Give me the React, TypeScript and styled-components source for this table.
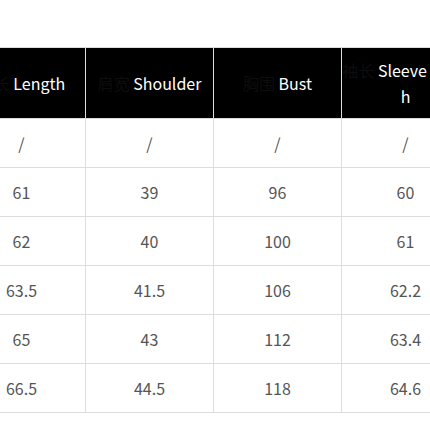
import { createGlobalStyle } from 'styled-components';
import styled from 'styled-components';

const GlobalStyle = createGlobalStyle`
  html, body {
    margin: 0;
    padding: 0;
    background: #fff;
  }
  body {
    font-family: "Noto Sans CJK SC", "Noto Sans", sans-serif;
  }
`;

const Frame = styled.div`
  width: 430px;
  height: 430px;
  overflow: hidden;
  padding-top: 47px;
  box-sizing: border-box;
`;

const SizeTable = styled.table`
  margin-left: -43px;
  width: 512px;
  table-layout: fixed;
  border-collapse: collapse;
`;

const Col = styled.col`
  width: 128px;
`;

const HeadCell = styled.th`
  box-sizing: border-box;
  height: 71px;
  padding: 0;
  background: #000;
  color: #fff;
  font-size: 16px;
  font-weight: 400;
  line-height: 26px;
  text-align: center;
  word-break: break-all;
  border: 1px solid #ddd;
`;

const Hidden = styled.span`
  color: #0d0d0d;
`;

const Cell = styled.td`
  box-sizing: border-box;
  height: 49px;
  padding: 0;
  color: #555;
  font-size: 16px;
  text-align: center;
  border: 1px solid #ddd;
`;

const columns = [
  { cn: '衣长', en: 'Length' },
  { cn: '肩宽', en: 'Shoulder' },
  { cn: '胸围', en: 'Bust' },
  { cn: '袖长', en: 'Sleeve length' },
];

const rows = [
  ['/', '/', '/', '/'],
  ['61', '39', '96', '60'],
  ['62', '40', '100', '61'],
  ['63.5', '41.5', '106', '62.2'],
  ['65', '43', '112', '63.4'],
  ['66.5', '44.5', '118', '64.6'],
];

const App = () => (
  <>
    <GlobalStyle />
    <Frame>
      <SizeTable>
        <colgroup>
          {columns.map(c => (
            <Col key={c.en} />
          ))}
        </colgroup>
        <thead>
          <tr>
            {columns.map(c => (
              <HeadCell key={c.en}>
                <Hidden>{c.cn} </Hidden>
                {c.en}
              </HeadCell>
            ))}
          </tr>
        </thead>
        <tbody>
          {rows.map((r, i) => (
            <tr key={i}>
              {r.map((v, j) => (
                <Cell key={j}>{v}</Cell>
              ))}
            </tr>
          ))}
        </tbody>
      </SizeTable>
    </Frame>
  </>
);

export default App;
